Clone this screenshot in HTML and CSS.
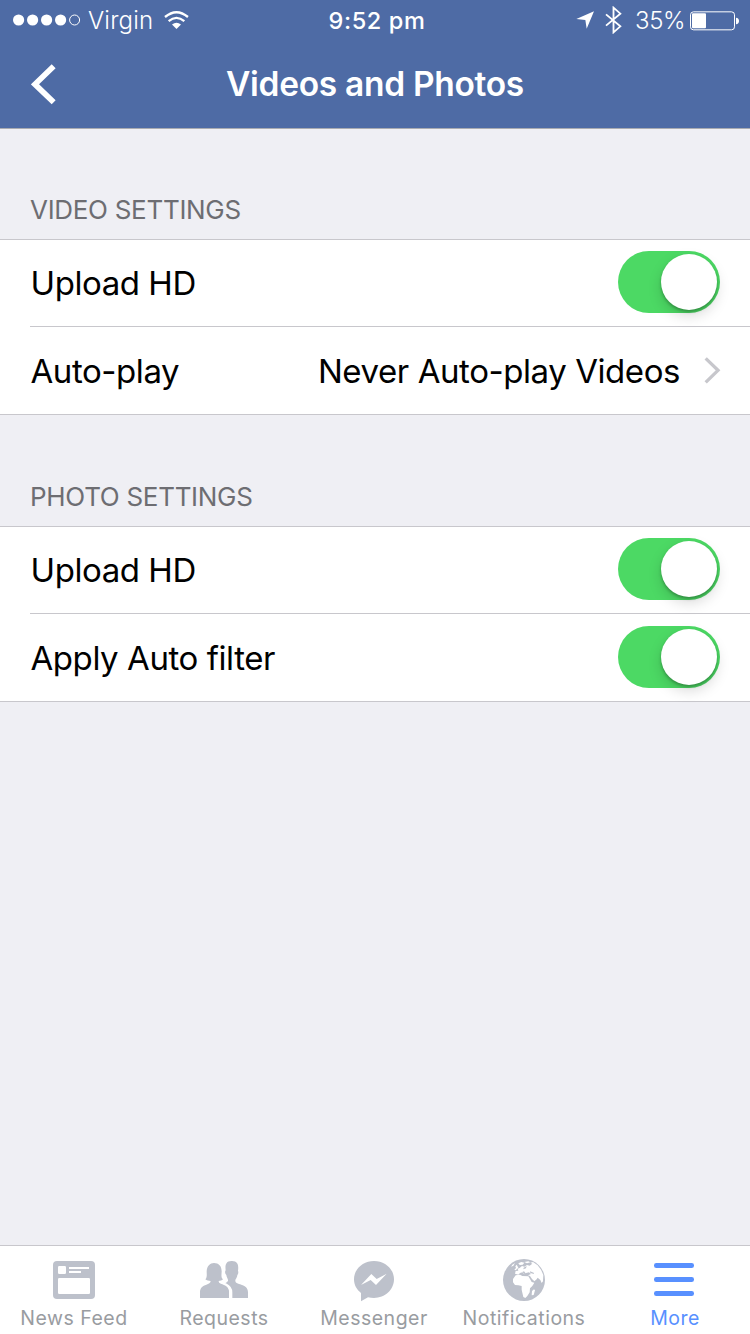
FILE: index.html
```html
<!DOCTYPE html>
<html lang="en">
<head>
<meta charset="utf-8">
<title>Videos and Photos</title>
<link rel="stylesheet" href="styles.css">
</head>
<body>
<div class="screen">
  <header class="top">
    <div class="status">
      <div class="status-left">
        <svg class="signal" viewBox="0 0 68 12"><g fill="#fff"><circle cx="5.6" cy="6" r="5.6"/><circle cx="19.6" cy="6" r="5.6"/><circle cx="33.6" cy="6" r="5.6"/><circle cx="47.6" cy="6" r="5.6"/></g><circle cx="61.6" cy="6" r="5" fill="none" stroke="#fff"/></svg>
        <span class="carrier">Virgin</span>
        <svg class="wifi" viewBox="492 30 76 60"><g fill="none" stroke="#fff" stroke-width="7"><path d="M495 51Q529.500 22 564 51"/><path d="M506 63.500Q529.500 43.500 553 63.500"/></g><path d="M516 73.500Q529.500 63 543 73.500L529.500 87Z" fill="#fff"/></svg>
      </div>
      <span class="clock">9:52 pm</span>
      <div class="status-right">
        <svg class="location" viewBox="48 36 56 54"><path d="M102 37L80 89L76 63L49 60Z" fill="#fff"/></svg>
        <svg class="bluetooth" viewBox="136 19 50 84"><path d="M139 44L182 80L161.500 98V24L182 42L139 78" fill="none" stroke="#fff" stroke-width="5.500"/></svg>
        <span class="percent">35%</span>
        <svg class="battery" viewBox="390 32 150 60"><rect x="391.500" y="34.500" width="132" height="54" rx="9" fill="none" stroke="#fff" stroke-width="3"/><rect x="396" y="39" width="42" height="45" rx="3" fill="#fff"/><path d="M528 52q9 1 9 10t-9 10Z" fill="#fff"/></svg>
      </div>
    </div>
    <div class="nav">
      <svg class="back" viewBox="93 190 75 123"><path d="M161 197L105 251L161 305" fill="none" stroke="#fff" stroke-width="17"/></svg>
      <h1 class="title">Videos and Photos</h1>
    </div>
  </header>
  <main class="content">
    <h2 class="section-title">VIDEO SETTINGS</h2>
    <section class="group">
      <div class="row"><span class="label">Upload HD</span><span class="switch"><i class="knob"></i></span></div>
      <div class="row"><span class="label">Auto-play</span><span class="value">Never Auto-play Videos</span>
        <svg class="chevron" viewBox="312 365 50 80"><path d="M317 369L354 405L317 441" fill="none" stroke="#c7c7cc" stroke-width="10"/></svg></div>
    </section>
    <h2 class="section-title photo">PHOTO SETTINGS</h2>
    <section class="group">
      <div class="row"><span class="label">Upload HD</span><span class="switch"><i class="knob"></i></span></div>
      <div class="row"><span class="label">Apply Auto filter</span><span class="switch"><i class="knob"></i></span></div>
    </section>
  </main>
  <nav class="tabs">
    <div class="tab"><svg class="icon" viewBox="135 45 180 150"><rect x="159" y="63" width="126" height="114" rx="12" fill="#bdc1cb"/><g fill="#fff"><rect x="174" y="78" width="24" height="24" rx="4"/><rect x="207" y="81" width="60" height="6"/><rect x="207" y="93" width="36" height="6"/><rect x="174" y="114" width="96" height="48" rx="4"/></g></svg><span class="tab-label">News Feed</span></div>
    <div class="tab"><svg class="icon" viewBox="75 45 180 150"><path d="M158 174H234V157C234 143 225 138 214 134C204 130 196 129 196 122C196 117 201 115 202 105C206 101 205 95 204 92C206 78 205 63 186 63C167 62 165 76 167 91C164 95 165 101 169 105C170 114 175 117 174 122C173 127 165 129 158 132Z" fill="#bdc1cb"/><path d="M152 128C156 130 162 132 167 135C177 140 182 146 182 157V176" fill="none" stroke="#fff" stroke-width="10"/><path d="M90 174V157C90 143 98 138 109 134C116 131 122 129 122 123C116 123 110 121 106 118C112 112 110 102 110 94C111 78 120 69 132 69C146 69 155 78 155 94C155 103 152 112 159 118C156 121 151 123 146 123C146 130 153 131 160 134C170 138 177 143 177 157V174Z" fill="#bdc1cb"/></svg><span class="tab-label">Requests</span></div>
    <div class="tab"><svg class="icon" viewBox="105 45 180 150"><path d="M192 63C225 63 252 87 252 118C252 149 225 174 192 174C186 174 180 173 174 172L153 184V159C140 149 132 135 132 118C132 87 159 63 192 63Z" fill="#bdc1cb"/><path d="M153 135L184 102L200 117L230 101L198 135L182 120Z" fill="#fff"/></svg><span class="tab-label">Messenger</span></div>
    <div class="tab"><svg class="icon" viewBox="120 45 180 150"><circle cx="207" cy="120" r="63" fill="#bdc1cb"/><g fill="#fff"><path d="M182 106L195 104L202 108L220 109L225 117L230 126L238 128L232 138L225 145L224 157L217 168L211 174L205 171L202 158L200 149V138L190 136L180 135L174 127V117Z"/><path d="M180 101L182 93L190 92L188 86L194 84L201 78L208 80L216 75L224 77L232 71L226 68L234 66L248 76L258 89L265 105L264 124L260 129L256 120L248 113L245 118L238 124L231 117L225 108L219 106L228 102L222 97L213 99L208 103L202 97L195 99L190 104Z"/><path d="M181 79L185 74L190 83L182 91L178 89L183 84Z"/><path d="M190 70L199 66L208 68L203 74L194 75Z"/><path d="M208 66L220 64L226 67L216 70Z"/><path d="M171 75L180 69L176 76L169 81Z"/><path d="M237 148L240 151L236 165L230 166L231 153Z"/></g><g fill="#bdc1cb"><path d="M202 96L207 94L213 101L209 103ZM225 94L236 98L237 102L226 99ZM206 83L215 78L213 85L205 88Z"/></g></svg><span class="tab-label">Notifications</span></div>
    <div class="tab"><svg class="icon" viewBox="45 45 180 150"><g fill="#5890ff"><rect x="72" y="69" width="120" height="15" rx="7"/><rect x="72" y="111" width="120" height="15" rx="7"/><rect x="72" y="153" width="120" height="15" rx="7"/></g></svg><span class="tab-label more">More</span></div>
  </nav>
</div>
</body>
</html>
```
FILE: styles.css
```css
* { box-sizing: border-box; }
body { margin: 0; font-family: Inter, Roboto, sans-serif; color: #000; }
svg { display: block; flex: none; }
.screen { width: 750px; height: 1334px; display: flex; flex-direction: column; background: #efeff4; overflow: hidden; }

.top { height: 129px; background: #4e6ba5; color: #fff; border-bottom: 1px solid #a9abb1; }
.status { height: 40px; display: grid; grid-template-columns: 1fr auto 1fr; align-items: center; font-size: 24px; line-height: 38px; white-space: nowrap; padding: 0 10px 0 13px; }
.status span { padding-top: 2px; }
.status-left, .status-right { display: flex; align-items: center; }
.status-right { justify-content: flex-end; }
.signal { width: 68px; height: 12px; }
.carrier { margin-left: 7px; width: 76px; font-weight: 300; letter-spacing: .2px; }
.wifi { width: 25.300px; height: 20px; }
.clock { font-weight: 500; font-size: 23.500px; letter-spacing: .6px; padding-left: 1px; }
.location { width: 18.700px; height: 18px; margin-right: 10.500px; }
.bluetooth { width: 16.700px; height: 28px; margin-right: 13px; }
.percent { font-weight: 300; width: 55px; font-size: 24px; letter-spacing: -.4px; }
.battery { width: 50px; height: 20px; margin-top: 1px; }

.nav { height: 88px; display: grid; grid-template-columns: 100px 1fr 100px; align-items: center; }
.back { width: 25px; height: 41px; margin-left: 31px; }
.title { margin: 0; text-align: center; font-size: 33.500px; line-height: 44px; font-weight: 600; letter-spacing: -.3px; white-space: nowrap; }

.content { flex: 1; }
.section-title { margin: 0; height: 110px; padding: 66px 0 0 30px; font-size: 26px; line-height: 30px; font-weight: 400; color: #6d6d72; letter-spacing: -.3px; }
.section-title.photo { height: 111px; padding-top: 67px; }
.group { height: 176px; background: #fff; border-top: 1px solid #c8c7cc; border-bottom: 1px solid #c8c7cc; }
.row { height: 87px; margin-left: 30px; padding-right: 30px; display: flex; align-items: center; font-size: 33px; line-height: 44px; letter-spacing: -.43px; white-space: nowrap; }
.row:first-child { border-bottom: 1px solid #c8c7cc; }
.label { flex: 1; padding-left: .5px; }
.row:last-child .label, .value { padding-top: 1px; }
.value { margin-right: 24px; }
.chevron { width: 16.700px; height: 26.700px; margin-right: -.7px; }
.switch { width: 102px; height: 62px; margin-bottom: 2px; border-radius: 31px; background: #4cd964; padding: 3px; display: flex; justify-content: flex-end; }
.knob { width: 56px; height: 56px; border-radius: 50%; background: #fff; box-shadow: 0 6px 14px rgba(0,0,0,.15), 0 2px 3px rgba(0,0,0,.25); }

.tabs { height: 89px; border-top: 1px solid #c8c7cc; background: #fff; display: grid; grid-template-columns: repeat(5, 1fr); }
.tab { display: flex; flex-direction: column; align-items: center; padding-top: 9px; }
.icon { width: 60px; height: 50px; }
.tab-label { font-size: 19.500px; line-height: 26px; font-weight: 400; color: #999ca1; letter-spacing: .5px; padding-right: 2px; white-space: nowrap; }
.tab-label.more { color: #5890ff; padding-right: 0; }
```
